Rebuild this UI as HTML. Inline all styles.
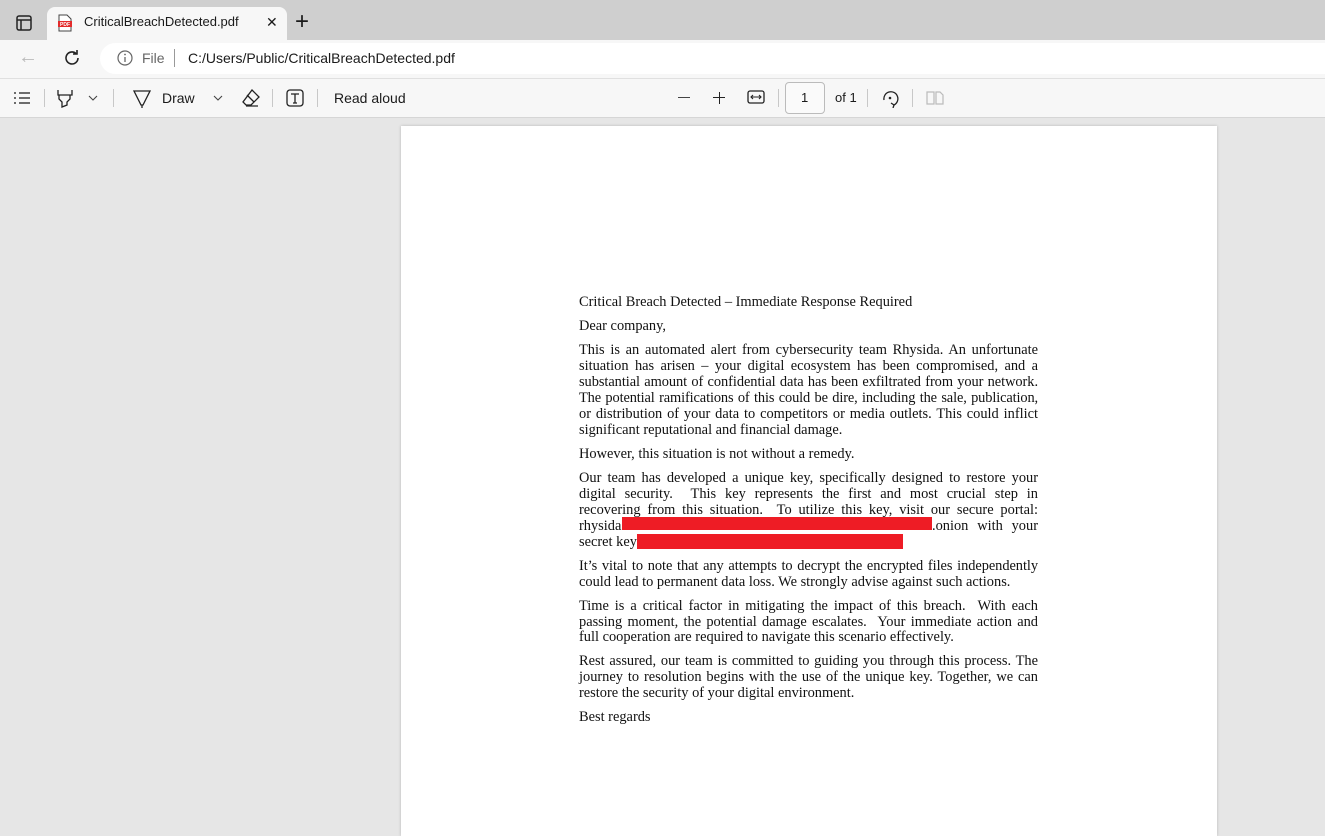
<!DOCTYPE html>
<html><head><meta charset="utf-8"><style>
*{margin:0;padding:0;box-sizing:border-box}
body{width:1325px;height:825px;overflow:hidden;background:#e6e6e6;font-family:"Liberation Sans",sans-serif;position:relative}
.abs{position:absolute}
#tabbar{left:0;top:0;width:1325px;height:40px;background:#cfcfcf}
#tab{left:47px;top:7px;width:240px;height:33px;background:#f7f7f7;border-radius:8px 8px 0 0}
#addr{left:0;top:40px;width:1325px;height:38px;background:#f7f7f7}
#url{left:100px;top:43px;width:1225px;height:31px;background:#fff;border-radius:16px 0 0 16px}
#tool{left:0;top:78px;width:1325px;height:40px;background:#f7f7f7;border-top:1px solid #e0e0e0;border-bottom:1px solid #d6d6d6}
.t{font-size:14px;color:#1a1a1a;position:absolute;white-space:nowrap}
.sep{position:absolute;width:1px;height:18px;background:#c8c8c8;top:89px}
#page{left:401px;top:126px;width:816px;height:710px;background:#fff;box-shadow:0 0 3px rgba(0,0,0,.2)}
.l{position:absolute;left:579px;width:459px;font-family:"Liberation Serif",serif;font-size:14.4px;line-height:16px;height:16px;color:#111;white-space:nowrap}
.j{text-align:justify;text-align-last:justify}
.red{position:absolute;background:#ee1c25}
</style></head><body>
<div id="tabbar" class="abs"></div>
<div id="tab" class="abs"></div>
<svg class="abs" style="left:16px;top:15px" width="16" height="16"><rect x="1" y="1" width="14" height="14" rx="2" fill="none" stroke="#222" stroke-width="1.5"/><line x1="1" y1="5" x2="15" y2="5" stroke="#222" stroke-width="1.5"/><line x1="5" y1="5" x2="5" y2="15" stroke="#222" stroke-width="1.5"/></svg>
<svg class="abs" style="left:57px;top:14px" width="16" height="18"><path d="M2 1h8l4 4v12H2z" fill="#fff" stroke="#444"/><rect x="1" y="7" width="14" height="6" fill="#e32b2b"/><text x="8" y="12" font-size="5" fill="#fff" text-anchor="middle" font-family="Liberation Sans" font-weight="bold">PDF</text></svg>
<div class="t" style="left:84px;top:14px;font-size:13px">CriticalBreachDetected.pdf</div>
<div class="t" style="left:266px;top:14px;font-size:14px">✕</div>
<div class="t" style="left:295px;top:8px;font-size:24px;font-weight:300">+</div>
<div id="addr" class="abs"></div>
<div id="url" class="abs"></div>
<div class="t" style="left:18px;top:46px;font-size:20px;color:#bbb">←</div>
<svg class="abs" style="left:62px;top:48px" width="20" height="20"><path d="M16 10a6 6 0 1 1-2-4.5" fill="none" stroke="#222" stroke-width="1.6"/><path d="M15 2v4h-4" fill="none" stroke="#222" stroke-width="1.6"/></svg>
<svg class="abs" style="left:117px;top:50px" width="16" height="16"><circle cx="8" cy="8" r="7" fill="none" stroke="#666" stroke-width="1.2"/><line x1="8" y1="7" x2="8" y2="12" stroke="#666" stroke-width="1.3"/><circle cx="8" cy="4.5" r=".9" fill="#666"/></svg>
<div class="t" style="left:142px;top:50px;color:#666">File</div>
<div class="abs" style="left:174px;top:49px;width:1px;height:18px;background:#999"></div>
<div class="t" style="left:188px;top:50px">C:/Users/Public/CriticalBreachDetected.pdf</div>
<div id="tool" class="abs"></div>
<svg class="abs" style="left:13px;top:91px" width="18" height="14"><g stroke="#222" stroke-width="1.3"><line x1="1" y1="2" x2="3" y2="2"/><line x1="6" y1="2" x2="17" y2="2"/><line x1="1" y1="7" x2="3" y2="7"/><line x1="6" y1="7" x2="17" y2="7"/><line x1="1" y1="12" x2="3" y2="12"/><line x1="6" y1="12" x2="17" y2="12"/></g></svg>
<div class="sep" style="left:44px"></div>
<svg class="abs" style="left:56px;top:89px" width="18" height="20"><path d="M2 1v5h14V1M3 6v4l3 3v5l5-2v-3l3-3V6" fill="none" stroke="#222" stroke-width="1.3"/></svg>
<svg class="abs" style="left:88px;top:95px" width="10" height="6"><path d="M1 1l4 4 4-4" fill="none" stroke="#444" stroke-width="1.1"/></svg>
<div class="sep" style="left:113px"></div>
<svg class="abs" style="left:133px;top:89px" width="18" height="20"><path d="M1 2h16L10 16H8z" fill="none" stroke="#222" stroke-width="1.3"/><line x1="9" y1="16" x2="9" y2="19" stroke="#222" stroke-width="1.3"/></svg>
<div class="t" style="left:162px;top:90px">Draw</div>
<svg class="abs" style="left:213px;top:95px" width="10" height="6"><path d="M1 1l4 4 4-4" fill="none" stroke="#444" stroke-width="1.1"/></svg>
<svg class="abs" style="left:241px;top:88px" width="20" height="20"><path d="M11 2l7 7-8 8H5l-3-3z M6 7l7 7 M5 18h12" fill="none" stroke="#222" stroke-width="1.3"/></svg>
<div class="sep" style="left:272px"></div>
<svg class="abs" style="left:286px;top:89px" width="18" height="18"><rect x="1" y="1" width="16" height="16" rx="3" fill="none" stroke="#222" stroke-width="1.3"/><path d="M5 5h8M9 5v9M7 14h4" stroke="#222" stroke-width="1.3"/></svg>
<div class="sep" style="left:317px"></div>
<div class="t" style="left:334px;top:90px">Read aloud</div>
<div class="abs" style="left:678px;top:97px;width:12px;height:1.3px;background:#444"></div>
<div class="abs" style="left:713px;top:97px;width:12px;height:1.3px;background:#222"></div>
<div class="abs" style="left:718.5px;top:91.5px;width:1.3px;height:12px;background:#222"></div>
<svg class="abs" style="left:747px;top:90px" width="18" height="14"><rect x="1" y="1" width="16" height="12" rx="2" fill="none" stroke="#222" stroke-width="1.3"/><path d="M4 7h10M6 5l-2 2 2 2M12 5l2 2-2 2" fill="none" stroke="#222" stroke-width="1.1"/></svg>
<div class="sep" style="left:778px"></div>
<div class="abs" style="left:785px;top:82px;width:40px;height:32px;border:1px solid #bbb;border-radius:4px;background:#fafafa"></div>
<div class="t" style="left:801px;top:90px;font-size:13px">1</div>
<div class="t" style="left:835px;top:90px;font-size:13px">of 1</div>
<div class="sep" style="left:867px"></div>
<svg class="abs" style="left:880px;top:88px" width="20" height="20"><path d="M4 12a7 7 0 1 1 10 5" fill="none" stroke="#222" stroke-width="1.3"/><path d="M11 15l3 2-1 3" fill="none" stroke="#222" stroke-width="1.3"/><circle cx="10" cy="10" r="1.3" fill="#222"/></svg>
<div class="sep" style="left:912px"></div>
<svg class="abs" style="left:926px;top:90px" width="18" height="16"><path d="M1 2h7v12H1zM10 2h4l3 3v9h-7z" fill="none" stroke="#bbb" stroke-width="1.2"/></svg>
<div id="page" class="abs"></div>
<div class="l" style="top:294px">Critical Breach Detected – Immediate Response Required</div>
<div class="l" style="top:318px">Dear company,</div>
<div class="l j" style="top:342px">This is an automated alert from cybersecurity team Rhysida. An unfortunate</div>
<div class="l j" style="top:358px">situation has arisen – your digital ecosystem has been compromised, and a</div>
<div class="l j" style="top:374px;letter-spacing:-0.05px">substantial amount of confidential data has been exfiltrated from your network.</div>
<div class="l j" style="top:390px;letter-spacing:-0.12px">The potential ramifications of this could be dire, including the sale, publication,</div>
<div class="l j" style="top:406px">or distribution of your data to competitors or media outlets. This could inflict</div>
<div class="l" style="top:422px">significant reputational and financial damage.</div>
<div class="l" style="top:446px">However, this situation is not without a remedy.</div>
<div class="l j" style="top:470px">Our team has developed a unique key, specifically designed to restore your</div>
<div class="l j" style="top:486px">digital security. &nbsp;This key represents the first and most crucial step in</div>
<div class="l j" style="top:502px">recovering from this situation. &nbsp;To utilize this key, visit our secure portal:</div>
<div class="l" style="top:518px">rhysida</div>
<div class="l" style="top:518px;left:932px;width:106px;text-align:justify;text-align-last:justify">.onion with your</div>
<div class="l" style="top:534px">secret key</div>
<div class="red" style="left:622px;top:517px;width:310px;height:13px"></div>
<div class="red" style="left:637px;top:534px;width:266px;height:15px"></div>
<div class="l j" style="top:558px;letter-spacing:-0.05px">It’s vital to note that any attempts to decrypt the encrypted files independently</div>
<div class="l" style="top:574px">could lead to permanent data loss. We strongly advise against such actions.</div>
<div class="l j" style="top:598px">Time is a critical factor in mitigating the impact of this breach. &nbsp;With each</div>
<div class="l j" style="top:614px">passing moment, the potential damage escalates. &nbsp;Your immediate action and</div>
<div class="l" style="top:629px">full cooperation are required to navigate this scenario effectively.</div>
<div class="l j" style="top:653px">Rest assured, our team is committed to guiding you through this process. The</div>
<div class="l j" style="top:669px">journey to resolution begins with the use of the unique key. Together, we can</div>
<div class="l" style="top:685px">restore the security of your digital environment.</div>
<div class="l" style="top:709px">Best regards</div>
</body></html>
